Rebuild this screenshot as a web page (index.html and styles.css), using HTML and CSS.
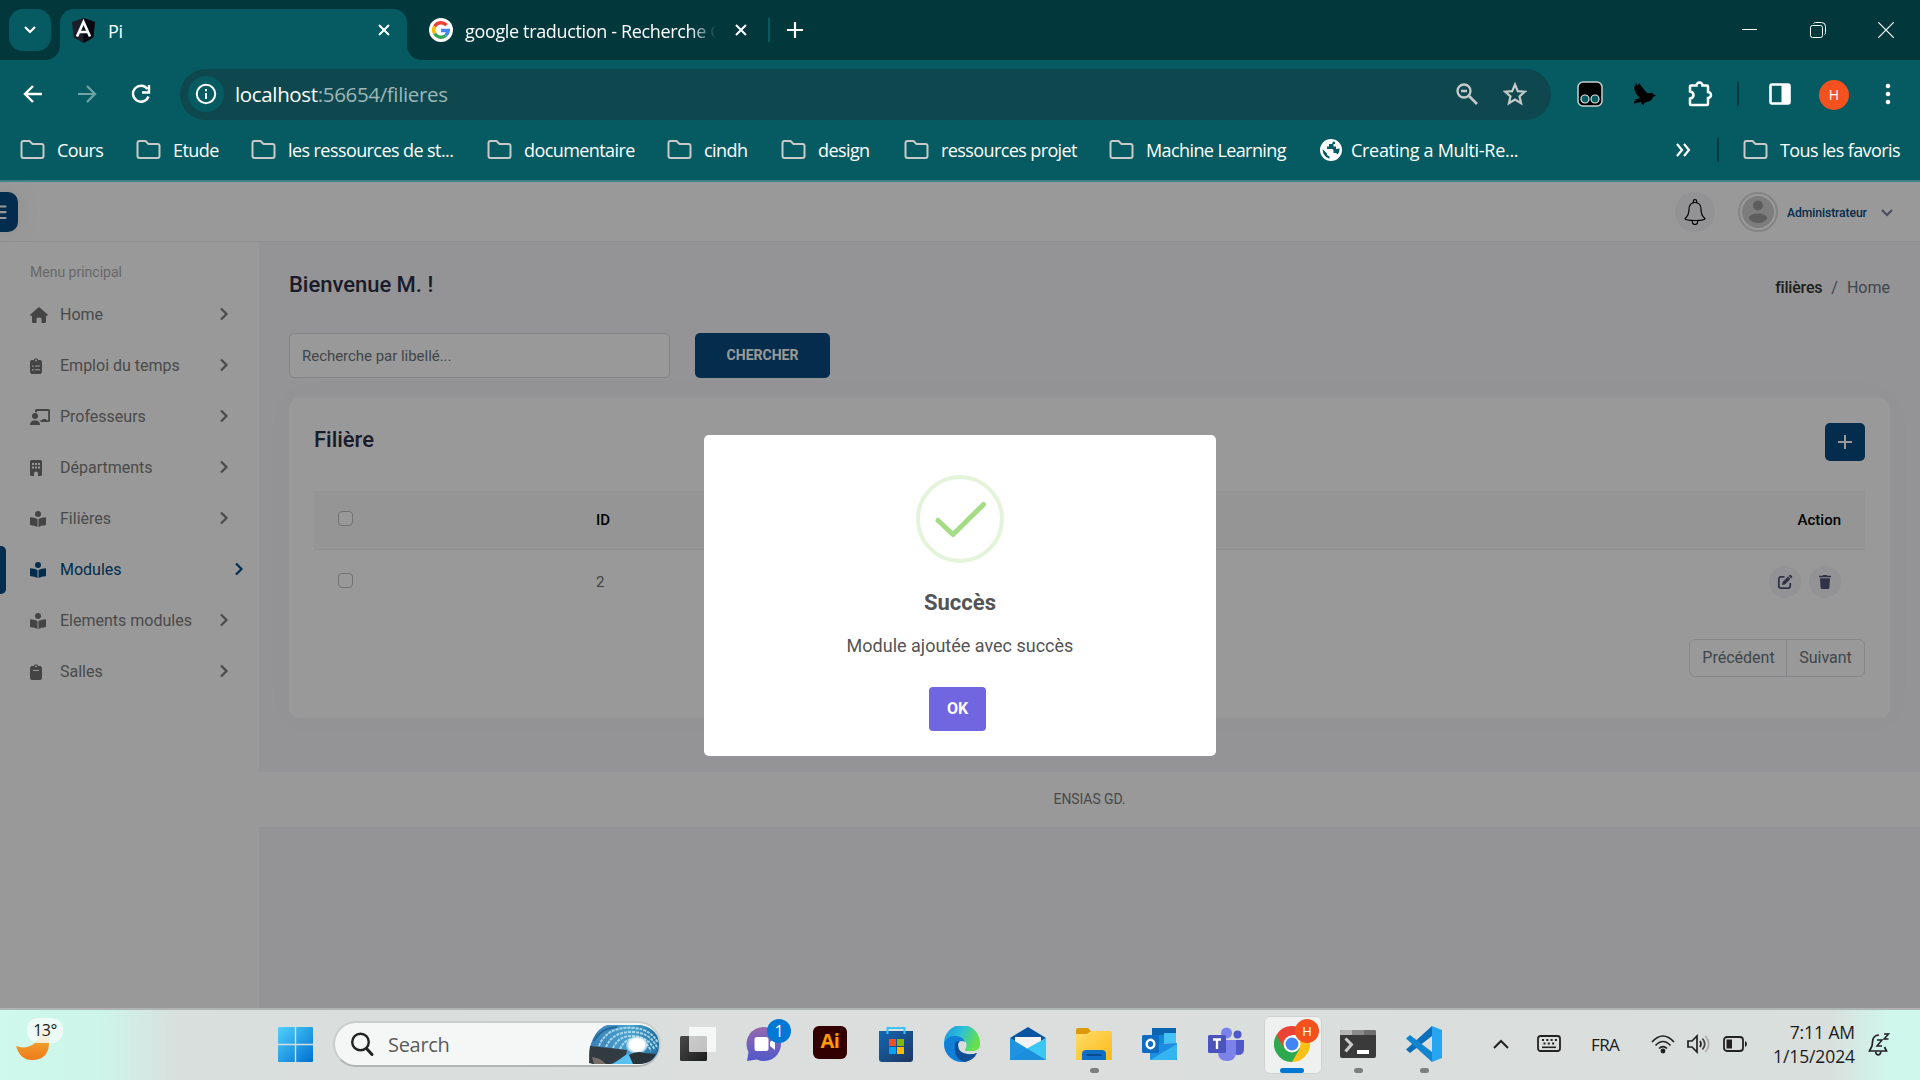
FILE: index.html
```html
<!DOCTYPE html>
<html lang="fr">
<head>
<meta charset="utf-8">
<title>Pi</title>
<link rel="stylesheet" href="styles.css">
</head>
<body>
<svg class="defs" width="0" height="0">
  <defs>
    <symbol id="folder" viewBox="0 0 25 21"><path d="M1.500 17V4q0-2 2-2h6l3 3h9q2 0 2 2v10q0 2-2 2h-18q-2 0-2-2z" fill="none" stroke="#c9c9c9" stroke-width="2"/></symbol>
    <symbol id="x" viewBox="0 0 14 14"><path d="M2 2l10 10M12 2L2 12" stroke="#fff" stroke-width="2" fill="none"/></symbol>
    <symbol id="chev" viewBox="0 0 10 14"><path d="M2 1.500l5.500 5.500L2 12.500" fill="none" stroke="currentColor" stroke-width="2.200"/></symbol>
    <symbol id="reader" viewBox="0 0 16 16"><circle cx="8" cy="3" r="3"/><path d="M0 6.300q4.500 0 7.500 1.700v8Q4.500 14.400.8 14.300q-.8 0-.8-.8zM16 6.300q-4.500 0-7.500 1.700v8q3-1.600 6.700-1.700.8 0 .8-.8z"/></symbol>
    <symbol id="home" viewBox="0 0 18 16"><path d="M9 0l8.700 7.600q.5.900-.6 1.200H16v6q0 1.200-1.200 1.200h-2.300q-1 0-1-1v-3.300q0-1-1-1H7.600q-1 0-1 1V15q0 1-1 1H3.300Q2 16 2 14.800v-6H.9Q-.2 8.500.3 7.600z"/></symbol>
    <symbol id="cliplist" viewBox="0 0 12 16"><path fill-rule="evenodd" d="M2 2h1.700a2.400 2.400 0 0 1 4.600 0H10q2 0 2 2v10q0 2-2 2H2q-2 0-2-2V4q0-2 2-2zm4-.5a.9.9 0 1 0 .01 0zM2 7.400v1.400h1.500V7.400zm3 0v1.100h5V7.400zM2 11v1.400h1.500V11zm3 .2v1.100h5v-1.100z"/></symbol>
    <symbol id="clip" viewBox="0 0 12 16"><path fill-rule="evenodd" d="M2 2h1.700a2.400 2.400 0 0 1 4.600 0H10q2 0 2 2v10q0 2-2 2H2q-2 0-2-2V4q0-2 2-2zm4-.5a.9.9 0 1 0 .01 0zM3 6v.9h6V6z"/></symbol>
    <symbol id="prof" viewBox="0 0 20 16"><circle cx="5" cy="7" r="3"/><path d="M0 16q.3-4.600 4-4.600h2q3.700 0 4 4.600z"/><path d="M5 3V1.500Q5 0 6.500 0h12Q20 0 20 1.500v10q0 1.500-1.500 1.500H11l-1.500-1.800h2.800V10h4v1.200h1.900V2H7v1.500Q6 3 5 3z"/></symbol>
    <symbol id="build" viewBox="0 0 12 16"><path fill-rule="evenodd" d="M1.500 0h9Q12 0 12 1.500v13q0 1.500-1.500 1.500H8v-2.500a2 2 0 0 0-4 0V16H1.500Q0 16 0 14.500v-13Q0 0 1.500 0zM2 3v2h2V3zm3 0v2h2V3zm3 0v2h2V3zM2 6.500v2h2v-2zm3 0v2h2v-2zm3 0v2h2v-2z"/></symbol>
    <linearGradient id="gw" x1="0" y1="0" x2="1" y2="1"><stop offset="0" stop-color="#4fd2fd"/><stop offset="1" stop-color="#0070d1"/></linearGradient>
    <linearGradient id="gmoon" x1="0" y1="0" x2="0" y2="1"><stop offset="0" stop-color="#f4b93c"/><stop offset="1" stop-color="#ee7a18"/></linearGradient>
    <linearGradient id="gchat" x1="0" y1="0" x2="0" y2="1"><stop offset="0" stop-color="#9668b0"/><stop offset="1" stop-color="#5059c9"/></linearGradient>
    <linearGradient id="gstore" x1="0" y1="0" x2="1" y2="1"><stop offset="0" stop-color="#1267b4"/><stop offset="1" stop-color="#20355f"/></linearGradient>
    <linearGradient id="gedge" x1="0" y1="0" x2="1" y2=".4"><stop offset="0" stop-color="#1a8fdc"/><stop offset=".5" stop-color="#2cc0d8"/><stop offset="1" stop-color="#66e04c"/></linearGradient>
    <linearGradient id="gfold" x1="0" y1="0" x2="1" y2="1"><stop offset="0" stop-color="#ffdd6b"/><stop offset="1" stop-color="#fbb915"/></linearGradient>
    <linearGradient id="gdark" x1="0" y1="0" x2="1" y2="1"><stop offset="0" stop-color="#4a4a4a"/><stop offset="1" stop-color="#1c1c1c"/></linearGradient>
    <linearGradient id="gcave" x1="0" y1="0" x2="1" y2="0"><stop offset="0" stop-color="#3a7fb5"/><stop offset=".6" stop-color="#4aa3cf"/><stop offset="1" stop-color="#1f6d9c"/></linearGradient>
    <radialGradient id="gsun"><stop offset="0" stop-color="#fff"/><stop offset=".7" stop-color="#fff"/><stop offset="1" stop-color="#cfeaf6" stop-opacity=".4"/></radialGradient>
  </defs>
</svg>

<header class="tabs">
  <div class="tabsearch"><svg width="14" height="10" viewBox="0 0 14 10"><path d="M2 2l5 5 5-5" stroke="#fff" stroke-width="2.200" fill="none"/></svg></div>
  <div class="tab on">
    <svg width="25" height="25" viewBox="0 0 25 25"><path d="M12.500 0L24 4l-1.700 15.500L12.500 25l-9.800-5.500L1 4z" fill="#1b1f2a"/><path d="M12.500 0L24 4l-1.700 15.500L12.500 25z" fill="#06080f"/><path d="M6 18.500L12.500 4 19 18.500M8.500 14h8" stroke="#fff" stroke-width="2.600" fill="none"/></svg>
    <span class="tt">Pi</span>
    <svg class="tx" width="14" height="14"><use href="#x"/></svg>
  </div>
  <div class="tab off">
    <svg width="24" height="24" viewBox="0 0 24 24"><circle cx="12" cy="12" r="12" fill="#fff"/><g fill="none" stroke-width="3.400"><path d="M17.500 7.200A7.300 7.300 0 0 0 5.700 8.300" stroke="#ea4335"/><path d="M5.700 8.300a7.300 7.300 0 0 0 0 7.400" stroke="#fbbc05"/><path d="M5.700 15.700a7.300 7.300 0 0 0 10.800 2" stroke="#34a853"/><path d="M16.500 17.700a7.300 7.300 0 0 0 2.800-5.200H12" stroke="#4285f4"/></g></svg>
    <span class="tt">google traduction - Recherche G</span>
    <svg class="tx" width="14" height="14"><use href="#x"/></svg>
  </div>
  <i class="tsep"></i>
  <svg class="plus" width="16" height="16" viewBox="0 0 16 16"><path d="M8 0v16M0 8h16" stroke="#fff" stroke-width="2.200"/></svg>
  <div class="win">
    <svg width="16" height="16" viewBox="0 0 16 16"><path d="M0 7.500h15" stroke="#fff"/></svg>
    <svg width="16" height="16" viewBox="0 0 16 16"><rect x=".5" y="3.500" width="12" height="12" rx="2" fill="none" stroke="#fff"/><path d="M3.500 1.500q1-1 2-1h6q4 0 4 4v6q0 1.500-1 2" fill="none" stroke="#fff"/></svg>
    <svg width="16" height="16" viewBox="0 0 16 16"><path d="M0 0l16 16M16 0L0 16" stroke="#fff" stroke-width="1.200"/></svg>
  </div>
</header>

<div class="bar">
  <div class="nav">
    <svg width="20" height="20" viewBox="0 0 20 20"><path d="M19 10H2M10 2l-8 8 8 8" stroke="#fff" stroke-width="2.400" fill="none"/></svg>
    <svg width="20" height="20" viewBox="0 0 20 20"><path d="M1 10h17M10 2l8 8-8 8" stroke="#6fa3a7" stroke-width="2.200" fill="none"/></svg>
    <svg width="20" height="20" viewBox="0 0 20 20"><path d="M17.500 12.500A8 8 0 1 1 16.500 5" stroke="#fff" stroke-width="2.400" fill="none"/><path d="M18 1v7.500h-7" fill="none" stroke="#fff" stroke-width="2.400"/></svg>
  </div>
  <div class="omni">
    <div class="info"><svg width="22" height="22" viewBox="0 0 22 22"><circle cx="11" cy="11" r="9.200" fill="none" stroke="#fff" stroke-width="2"/><path d="M11 10v6M11 6v2.200" stroke="#fff" stroke-width="2"/></svg></div>
    <div class="url"><b>localhost</b>:56654/filieres</div>
    <svg width="22" height="22" viewBox="0 0 22 22"><circle cx="8" cy="8" r="6.500" fill="none" stroke="#c5c9ca" stroke-width="2.300"/><path d="M5 8h6M13 13l8 8" stroke="#c5c9ca" stroke-width="2.600"/></svg>
    <svg class="star" width="24" height="24" viewBox="0 0 24 24"><path d="M12 2.500l2.800 6.600 7 .6-5.300 4.600 1.600 6.900L12 17.500l-6.100 3.700 1.600-6.900-5.300-4.600 7-.6z" fill="none" stroke="#c5c9ca" stroke-width="2.200"/></svg>
  </div>
  <div class="ext">
    <svg width="26" height="26" viewBox="0 0 26 26"><rect x="1" y="1" width="24" height="24" rx="5" fill="#000" stroke="#c8cfd0" stroke-width="1.500"/><circle cx="8" cy="18" r="4" fill="#055b61" stroke="#dfe6e6" stroke-width="1.200"/><circle cx="18" cy="18" r="4" fill="#055b61" stroke="#dfe6e6" stroke-width="1.200"/></svg>
    <svg width="24" height="24" viewBox="0 0 24 24"><path d="M2 4l1 1 1-4 2 3 1-3 7 9q2 2 4 1 2-1 3 1l3 1.500-3 1.500q-1 4-6 5l-3 1v3l-1-2-1 1-1-3-7 1.500L2 19.500l3-1.500-3 0 6-2Q2 11 2 4z" fill="#000"/></svg>
    <svg width="26" height="26" viewBox="0 0 26 26"><path d="M3 5.500q0-1 1-1h5.500a3 3 0 0 1 6 0H20q1 0 1 1V11a3 3 0 0 1 0 6v6q0 1-1 1H4q-1 0-1-1v-5.500q3.500-.5 3.500-3.500T3 10.500z" fill="none" stroke="#fff" stroke-width="2.500"/></svg>
    <i class="sep"></i>
    <svg width="22" height="22" viewBox="0 0 22 22"><rect x="1.500" y="1.500" width="19" height="19" rx="1.500" fill="none" stroke="#fff" stroke-width="2.600"/><path d="M12.500 2H21v18h-8.500z" fill="#fff"/></svg>
    <div class="ava">H</div>
    <svg width="6" height="22" viewBox="0 0 6 22"><g fill="#fff"><circle cx="3" cy="3" r="2.300"/><circle cx="3" cy="11" r="2.300"/><circle cx="3" cy="19" r="2.300"/></g></svg>
  </div>
</div>

<nav class="marks">
  <a class="m1"><svg width="25" height="21"><use href="#folder"/></svg>Cours</a>
  <a class="m2"><svg width="25" height="21"><use href="#folder"/></svg>Etude</a>
  <a class="m3"><svg width="25" height="21"><use href="#folder"/></svg>les ressources de st...</a>
  <a class="m4"><svg width="25" height="21"><use href="#folder"/></svg>documentaire</a>
  <a class="m5"><svg width="25" height="21"><use href="#folder"/></svg>cindh</a>
  <a class="m6"><svg width="25" height="21"><use href="#folder"/></svg>design</a>
  <a class="m7"><svg width="25" height="21"><use href="#folder"/></svg>ressources projet</a>
  <a class="m8"><svg width="25" height="21"><use href="#folder"/></svg>Machine Learning</a>
  <a class="m9"><svg width="22" height="22" viewBox="0 0 22 22"><circle cx="11" cy="11" r="11" fill="#fff"/><path d="M13 2.500l-1 2.500H9v2.500H7V10h5q1.500 0 1.500 2v2h2q1.500 0 2 1.500Q20 13 19.500 9.500L16 10V7.500h-2.500V5H15V3zM2.500 10l4.500 4.500v1.500l2.500 1.500v2.200Q3 18 2.500 10z" fill="#055b61"/></svg>Creating a Multi-Re...</a>
  <svg class="more" width="16" height="14" viewBox="0 0 16 14"><path d="M2 1l5 6-5 6M9 1l5 6-5 6" fill="none" stroke="#fff" stroke-width="2.200"/></svg>
  <i class="sep"></i>
  <a class="m10"><svg width="25" height="21"><use href="#folder"/></svg>Tous les favoris</a>
</nav>

<div class="app">
  <div class="top">
    <div class="toggle"><svg width="18" height="15" viewBox="0 0 18 15"><path d="M1.500 1.500h15M1.500 7.200h15M1.500 13h15" stroke="#fff" stroke-width="2.200" stroke-linecap="round"/></svg></div>
    <div class="bell"><svg width="22" height="26" viewBox="0 0 22 26" fill="none" stroke="#000" stroke-width="1.200"><path d="M1 19.500q4-3 4-9Q5 3.500 11 3.500t6 7q0 6 4 9 0 2-10 2t-10-2z"/><path d="M9.300 3.700V2.400a1.700 1.700 0 0 1 3.400 0v1.300M8.300 21.500v1.300a2.700 2.700 0 0 0 5.400 0v-1.300"/></svg></div>
    <svg class="avatar" width="40" height="40" viewBox="0 0 40 40"><circle cx="20" cy="20" r="19" fill="#fff" stroke="#dcdcdc" stroke-width="2"/><circle cx="20" cy="20" r="16" fill="#d0d0d0"/><circle cx="20" cy="13.500" r="5" fill="#9c9c9c"/><path d="M10.500 26q2-4.500 9.500-4.500t9.500 4.500q-3 5-9.500 5t-9.500-5z" fill="#9c9c9c"/></svg>
    <span class="admin">Administrateur</span>
    <svg class="down" width="12" height="8" viewBox="0 0 12 8"><path d="M1 1l5 5 5-5" fill="none" stroke="#7c80a0" stroke-width="2.200"/></svg>
  </div>
  <div class="cols">
    <aside>
      <p>Menu principal</p>
      <a><span><svg width="18" height="16"><use href="#home"/></svg></span>Home<svg class="ch" width="10" height="14"><use href="#chev"/></svg></a>
      <a><span><svg width="12" height="16"><use href="#cliplist"/></svg></span>Emploi du temps<svg class="ch" width="10" height="14"><use href="#chev"/></svg></a>
      <a><span><svg width="20" height="16"><use href="#prof"/></svg></span>Professeurs<svg class="ch" width="10" height="14"><use href="#chev"/></svg></a>
      <a><span><svg width="12" height="16"><use href="#build"/></svg></span>Départments<svg class="ch" width="10" height="14"><use href="#chev"/></svg></a>
      <a><span><svg width="16" height="16"><use href="#reader"/></svg></span>Filières<svg class="ch" width="10" height="14"><use href="#chev"/></svg></a>
      <a class="act"><span><svg width="16" height="16"><use href="#reader"/></svg></span>Modules<svg class="ch" width="10" height="14"><use href="#chev"/></svg></a>
      <a><span><svg width="16" height="16"><use href="#reader"/></svg></span>Elements modules<svg class="ch" width="10" height="14"><use href="#chev"/></svg></a>
      <a><span><svg width="12" height="16"><use href="#clip"/></svg></span>Salles<svg class="ch" width="10" height="14"><use href="#chev"/></svg></a>
    </aside>
    <main>
      <div class="content">
        <div class="head"><h3>Bienvenue M. !</h3><div class="crumb"><b>filières</b><i>/</i>Home</div></div>
        <div class="search"><div class="inp">Recherche par libellé...</div><div class="btn">CHERCHER</div></div>
        <section class="card">
          <div class="ctop"><h3>Filière</h3><div class="add"><svg width="14" height="14" viewBox="0 0 14 14"><path d="M7 0v14M0 7h14" stroke="#fff" stroke-width="2"/></svg></div></div>
          <div class="row th"><i class="cb"></i><span class="id">ID</span><span class="end">Action</span></div>
          <div class="row"><i class="cb"></i><span class="id">2</span>
            <div class="acts">
              <div><svg width="16" height="16" viewBox="0 0 16 16"><path d="M7.500 2.800H4q-2.200 0-2.200 2.200v7q0 2.200 2.200 2.200h7q2.200 0 2.200-2.200V9" fill="none" stroke="#51547a" stroke-width="1.800"/><path d="M5 11l.6-3L11 2.600l2.500 2.500L8 10.400zM11.700 1.900l.8-.8q.7-.6 1.400 0l1 1q.7.700 0 1.500l-.7.800z" fill="#51547a"/></svg></div>
              <div><svg width="14" height="16" viewBox="0 0 14 16"><path d="M1 1.800h3.500l.7-.8h3.600l.7.800H13v1.500H1zM2 4.300h10l-.6 9.400q-.1 1.300-1.400 1.300H4q-1.300 0-1.400-1.300z" fill="#51547a"/></svg></div>
            </div>
          </div>
          <div class="pager"><span>Précédent</span><span>Suivant</span></div>
        </section>
      </div>
      <footer>ENSIAS GD.</footer>
    </main>
  </div>
  <div class="overlay">
    <div class="modal">
      <svg width="88" height="88" viewBox="0 0 88 88"><circle cx="44" cy="44" r="42" fill="none" stroke="#e4f4db" stroke-width="4"/><path d="M22 45.500L37 59.500 67.500 29.500" fill="none" stroke="#a5dc86" stroke-width="5" stroke-linecap="round" stroke-linejoin="round"/></svg>
      <h2>Succès</h2>
      <p>Module ajoutée avec succès</p>
      <div class="ok">OK</div>
    </div>
  </div>
</div>

<div class="task">
  <div class="weather"><svg width="34" height="34" viewBox="0 0 34 34"><path d="M26 1q8 6 7 16-1 16-17 16Q4 33 0 19q10 4 19-3 7-6 7-15z" fill="url(#gmoon)"/></svg><span>13°</span></div>
  <svg class="start" width="35" height="35" viewBox="0 0 35 35" fill="url(#gw)"><path d="M1 0h15.800v16.800H0V1q0-1 1-1zM18.200 0H34q1 0 1 1v15.800H18.200zM0 18.200h16.800V35H1q-1 0-1-1zM18.200 18.200H35V34q0 1-1 1H18.200z"/></svg>
  <div class="sbox">
    <svg width="24" height="24" viewBox="0 0 24 24"><circle cx="10.500" cy="10" r="8.300" fill="none" stroke="#222" stroke-width="2.400"/><path d="M16.500 16.500L22 22.500" stroke="#222" stroke-width="3" stroke-linecap="round"/></svg>
    <span>Search</span>
    <svg class="cave" width="70" height="39" viewBox="0 0 70 39"><path d="M18 0h34q18 4 18 20T52 39H4Q-2 36 1 22 6 4 18 0z" fill="url(#gcave)"/><g fill="none" stroke="#b9e2f2" stroke-dasharray="3 1" stroke-width="2" stroke-opacity=".85"><path d="M10 21Q18 1 44 3q18 1 25 15"/><path d="M17 22Q24 6 45 7q16 1 23 15"/><path d="M24 23q6-13 21-12 14 1 21 14"/><path d="M31 24q5-11 16-10 10 1 15 12"/></g><path d="M5 16Q12 3 28 2" fill="none" stroke="#24679b" stroke-width="2"/><ellipse cx="48" cy="20" rx="11" ry="9" fill="url(#gsun)"/><path d="M0 38l1-17 20 2 17 2-1 7-15 7H4z" fill="#333b42"/><path d="M3 32l8 2 6 5H5z" fill="#77706a"/><path d="M24 39l14-10 5 4 1 6z" fill="#58c3f2"/><path d="M40 30q8-5 15-2l12 1q-4 9-15 10h-8z" fill="#2b333a"/></svg>
  </div>
  <div class="apps">
    <div><svg width="36" height="36" viewBox="0 0 36 36"><rect x="0" y="10" width="27" height="25" rx="1.500" fill="url(#gdark)"/><rect x="9" y="1" width="27" height="25" rx="1" fill="#fff" fill-opacity=".72"/></svg></div>
    <div><svg width="36" height="36" viewBox="0 0 36 36"><path d="M18 1a17 17 0 1 1-7 32.500L1 35l1.500-9A17 17 0 0 1 18 1z" fill="url(#gchat)"/><rect x="8.500" y="11" width="14" height="14" rx="2.500" fill="#fff"/><path d="M24 16l5-4v12l-5-4z" fill="#fff"/></svg><b class="badge">1</b></div>
    <div><span class="ai">Ai</span></div>
    <div><svg width="36" height="36" viewBox="0 0 36 36"><path d="M1 5h34v28q0 3-3 3H4q-3 0-3-3z" fill="url(#gstore)"/><path d="M9.500 8V2h17v6" fill="none" stroke="#3cc4f5" stroke-width="2"/><path fill="#f25022" d="M11 13h7v7h-7z"/><path fill="#7fba00" d="M19 13h7v7h-7z"/><path fill="#00a4ef" d="M11 21h7v7h-7z"/><path fill="#ffb900" d="M19 21h7v7h-7z"/></svg></div>
    <div><svg width="36" height="36" viewBox="0 0 36 36"><path d="M0 18a18 18 0 0 1 36-2q1 9-8 9h-6q-2 0 0-3 2-7-4-8-8 0-10 6z" fill="url(#gedge)"/><path d="M0 18Q2 10 11 10q8 0 10 6-6-3-7 3 0 8 9 9 6 1 10-1-5 9-15 9A18 18 0 0 1 0 18z" fill="#0f7fd8"/><path d="M11 18q-2 14 9 18 9-1 13-9-5 2-10 1-9-1-9-9 0-2 1-4-3 0-4 3z" fill="#114d94"/></svg></div>
    <div><svg width="36" height="36" viewBox="0 0 36 36"><path d="M0 12L18 1l18 11-18 12z" fill="#0a55a0"/><path d="M5 11h26v7L18 26 5 18z" fill="#f3f3f3"/><path d="M0 12l36 22H0z" fill="#1f94e0"/><path d="M36 12v22L17 22.500z" fill="#3cc6f2"/><path d="M0 34h36L18 23z" fill="#1c8fdc"/></svg></div>
    <div><svg width="36" height="36" viewBox="0 0 36 36"><path d="M0 4q0-2 2-2h10l3 3v4H0z" fill="#dc9a0a"/><path d="M0 8h11l4-3h19q2 0 2 2v27H0z" fill="url(#gfold)"/><path d="M6 34v-6q0-4 4-4h16q4 0 4 4v6z" fill="#0f6fc6"/><path d="M10.500 29h15" stroke="#0a3f80" stroke-width="1.500"/></svg><i class="dot"></i></div>
    <div><svg width="36" height="36" viewBox="0 0 36 36"><path d="M10 2h24v14H10z" fill="#0c64b0"/><path d="M10 9h12v9H10z" fill="#1489d8"/><path d="M22 7h12v10H22z" fill="#42c2f5"/><path d="M8 18l27-1v17H8z" fill="#1c8de0"/><path d="M8 34l27-16v14q0 2-2 2z" fill="#36b4f0"/><rect x="0" y="9" width="17" height="18" rx="1.500" fill="#0f6cc4"/><ellipse cx="8.500" cy="18" rx="3.800" ry="4.300" fill="none" stroke="#fff" stroke-width="2.500"/></svg></div>
    <div><svg width="36" height="36" viewBox="0 0 36 36"><circle cx="18.500" cy="7" r="5.500" fill="#7b83eb"/><circle cx="29.500" cy="8.500" r="4" fill="#5059c9"/><path d="M24 14h12v9q0 6-6 6-4 0-6-3z" fill="#5059c9"/><path d="M10 14h18v12q0 9-9 9t-9-9z" fill="#7b83eb"/><rect x="0" y="9" width="18" height="18" rx="1.500" fill="#4b53bc"/><path d="M5 13.500h8M9 13.500V23" stroke="#fff" stroke-width="2.300"/></svg></div>
    <div class="tile"><svg width="36" height="36" viewBox="0 0 36 36"><path d="M18 18L33.600 9A18 18 0 0 1 18 36z" fill="#fbc116"/><path d="M2.400 9A18 18 0 0 0 18 36l7.800-13.500L18 18z" fill="#2da94f"/><path d="M2.400 9A18 18 0 0 1 33.600 9H18L10.200 22.500z" fill="#ea4335"/><circle cx="18" cy="18" r="8.500" fill="#fff"/><circle cx="18" cy="18" r="6.500" fill="#4285f4"/></svg><b class="badge red">H</b><i class="dot blue"></i></div>
    <div><svg width="36" height="36" viewBox="0 0 36 36"><rect x="0" y="4" width="36" height="28" rx="2" fill="#3a3a3a"/><path d="M2 4h10v5H0V6q0-2 2-2z" fill="#b5b5b5"/><path d="M12 4h12v5H12z" fill="#8b8b8b"/><path d="M24 4h10q2 0 2 2v3H24z" fill="#6e6e6e"/><path d="M5.500 12.500l6 6-6 7" fill="none" stroke="#ccc" stroke-width="3"/><path d="M17 24h12v4H17z" fill="#fff"/></svg><i class="dot"></i></div>
    <div><svg width="36" height="36" viewBox="0 0 36 36"><path d="M26 0v10L4 27l-4-3.500z" fill="#0a6fb8"/><path d="M0 12.500L4 9l22 17v10z" fill="#1185cf"/><path d="M26 0l10 4v28l-10 4z" fill="#28a5f0"/></svg><i class="dot"></i></div>
  </div>
  <div class="tray">
    <svg width="16" height="10" viewBox="0 0 16 10"><path d="M1 9l7-7 7 7" fill="none" stroke="#222" stroke-width="2"/></svg>
    <svg width="24" height="18" viewBox="0 0 24 18"><rect x="1" y="1" width="22" height="15" rx="2.500" fill="none" stroke="#222" stroke-width="1.800"/><path d="M5 5h15M6.500 8.500h12" stroke="#222" stroke-width="1.800" stroke-dasharray="2 2.300"/><path d="M5 12.300h14" stroke="#222" stroke-width="1.600"/></svg>
    <span class="fra">FRA</span>
    <svg width="24" height="20" viewBox="0 0 24 20" fill="none" stroke="#222" stroke-width="1.700"><path d="M1 8q11-12 22 0M4.500 11.500q7.500-8 15 0M8 14.500q4-4 8 0"/><circle cx="12" cy="17" r="1.600" fill="#222"/></svg>
    <svg width="24" height="20" viewBox="0 0 24 20" fill="none" stroke="#222" stroke-width="1.700"><path d="M1 7h4l5-5v16l-5-5H1z"/><path d="M13 7q2 3 0 6"/><path d="M15.500 4.500q4.500 5.500 0 11" stroke="#444"/><path d="M18.500 2q6.500 8 0 16" stroke="#aaa"/></svg>
    <svg width="24" height="16" viewBox="0 0 24 16"><rect x="1" y="1" width="19" height="14" rx="3" fill="none" stroke="#222" stroke-width="1.800"/><path d="M3.500 3.500H9v9H3.500z" fill="#222"/><path d="M22 5q2 1 2 3t-2 3z" fill="#222"/></svg>
    <div class="clock">7:11 AM<br>1/15/2024</div>
    <svg width="22" height="24" viewBox="0 0 22 24" fill="none" stroke="#222" stroke-width="1.700"><path d="M11 3q-6 0-6.500 7L4 14l-2.500 5h17L16.500 15M7.500 20q1 3 2.700 3t2.800-3"/><path d="M9 8h5l-5 6h5M16 2h4.500L16 7h4.500" stroke-width="1.500"/></svg>
  </div>
</div>
</body>
</html>
```
FILE: styles.css
```css
* { box-sizing: border-box; }
body {
  margin: 0; width: 1920px; height: 1080px; overflow: hidden;
  display: flex; flex-direction: column;
  font-family: Roboto, "Liberation Sans", sans-serif; background: #055b61;
}
.defs { position: absolute; }
svg { flex: none; display: block; }
i, b { font-style: normal; }
h2, h3, p { margin: 0; }
.tabs, .bar, .marks, .task { font-family: "Open Sans", "Noto Sans", sans-serif; color: #fff; }

/* browser tab strip */
.tabs { height: 60px; flex: none; background: #02373c; display: flex; align-items: center; padding-left: 9px; }
.tabsearch { width: 42px; height: 42px; border-radius: 14px; background: #055b61; display: flex; align-items: center; justify-content: center; }
.tab { display: flex; align-items: center; font-size: 18px; letter-spacing: -.35px; white-space: nowrap; }
.tab.on { position: relative; margin-left: 9px; align-self: flex-end; width: 347px; height: 51px; background: #055b61; border-radius: 14px 14px 0 0; padding: 0 16px 9px 11px; }
.tab.on::before, .tab.on::after { content: ""; position: absolute; bottom: 0; width: 14px; height: 14px; }
.tab.on::before { left: -14px; background: radial-gradient(circle at 0 0, transparent 13.5px, #055b61 14px); }
.tab.on::after { right: -14px; background: radial-gradient(circle at 100% 0, transparent 13.5px, #055b61 14px); }
.tab .tt { margin-left: 12px; padding-top: 2px; flex: 1; }
.tab.off { width: 341px; margin-left: 22px; }
.tab.off .tt { flex: none; width: 264px; margin-left: 12px; -webkit-mask-image: linear-gradient(90deg, #000 225px, transparent 251px); mask-image: linear-gradient(90deg, #000 225px, transparent 251px); }
.tab.off .tx { margin-left: 5px; }
.tsep { width: 2px; height: 24px; background: #055b61; margin: 0 0 0 -2px; }
.plus { margin-left: 17px; }
.win { margin-left: auto; display: flex; gap: 52px; padding-right: 26px; }

/* toolbar */
.bar { height: 68px; flex: none; background: #055b61; display: flex; align-items: center; }
.nav { display: flex; gap: 34px; padding-left: 23px; width: 180px; }
.omni { width: 1371px; height: 51px; border-radius: 26px; background: #0e484e; display: flex; align-items: center; padding: 0 24px 0 8px; }
.info { width: 36px; height: 36px; border-radius: 50%; background: #055b61; display: flex; align-items: center; justify-content: center; }
.url { flex: 1; margin-left: 11px; font-size: 20.5px; letter-spacing: -.35px; color: #9fb6b8; }
.url b { font-weight: 400; color: #fff; }
.star { margin-left: 25px; }
.ext { display: flex; align-items: center; padding-left: 26px; }
.ext > :nth-child(2) { margin-left: 29px; }
.ext > :nth-child(3) { margin-left: 31px; }
.sep { width: 2px; height: 24px; background: #02373c; }
.ext .sep { margin-left: 24px; }
.ext > :nth-child(5) { margin-left: 30px; }
.ava { width: 30px; height: 30px; margin: 1px 36px 0 28px; border-radius: 50%; background: #f4511e; font-size: 14px; display: flex; align-items: center; justify-content: center; }

/* bookmarks */
.marks { height: 54px; flex: none; display: flex; align-items: center; padding: 0 0 9px 20px; border-bottom: 2px solid #3f8186; font-size: 18px; letter-spacing: -.58px; white-space: nowrap; }
.marks a { display: flex; align-items: center; gap: 12px; flex: none; }
.m1 { width: 116px; } .m2 { width: 115px; } .m3 { width: 236px; } .m4 { width: 180px; }
.m5 { width: 114px; } .m6 { width: 123px; } .m7 { width: 205px; } .m8 { width: 211px; }
.marks .m7, .marks .m8 { letter-spacing: -.6px; }
.marks .m9 { width: 355px; gap: 9px; letter-spacing: -.3px; }
.more { margin-right: 26px; }
.m10 { margin-left: 24px; }

/* application */
.app { position: relative; height: 826px; flex: none; background: #f7f7fa; display: flex; flex-direction: column; overflow: hidden; }
.top { height: 60px; flex: none; background: #fff; border-bottom: 1px solid #efefef; display: flex; align-items: center; padding: 1px 27px 0 0; }
.toggle { width: 40px; height: 40px; margin-left: -22px; border-radius: 10px; background: #054a80; box-shadow: 0 0 30px rgba(0,0,0,.06); display: flex; align-items: center; justify-content: center; }
.bell { width: 40px; height: 40px; margin-left: auto; border-radius: 50%; background: #f5f5f9; display: flex; align-items: center; justify-content: center; }
.avatar { margin-left: 23px; }
.admin { width: 94px; margin: 1px 0 0 9px; font-size: 12.2px; font-weight: 500; letter-spacing: -.1px; color: #054a80; }
.down { margin-top: 2px; }
.cols { display: flex; flex: 1; }
aside { width: 259px; background: #fff; padding-top: 21px; }
aside p { font-size: 14px; line-height: 18px; padding-left: 30px; margin-bottom: 9px; color: #aeaeae; }
aside a { height: 48px; margin-bottom: 3px; display: flex; align-items: center; padding: 0 30px 0 30px; font-size: 16px; color: #7c7c7c; }
aside a span { width: 30px; color: #727272; fill: currentColor; padding-top: 2px; }
.ch { margin-left: auto; }
aside .act { padding: 0 15px 0 30px; color: #054a80; position: relative; }
aside .act::before { content: ""; position: absolute; left: 0; top: 1px; width: 6px; height: 48px; border-radius: 0 5px 5px 0; background: #054a80; }
aside .act span { color: #054a80; }
main { flex: 1; }
.content { height: 530px; padding: 29px 30px 0; }
.head { display: flex; justify-content: space-between; height: 62px; }
h3 { font-size: 22px; line-height: 28px; font-weight: 500; letter-spacing: -.02px; color: #2c3046; }
.crumb { font-size: 16px; line-height: 34px; color: #6c757d; }
.crumb b { font-weight: 500; letter-spacing: -.2px; color: #333; }
.crumb i { margin: 0 9px; }
.search { display: flex; gap: 25px; height: 45px; }
.inp { width: 381px; border: 1px solid #ddd; border-radius: 5px; background: #fff; padding-left: 12px; line-height: 45px; font-size: 15px; letter-spacing: -.03px; color: #6c757d; }
.btn { width: 135px; border-radius: 5px; background: #054a80; color: #fff; font-weight: 700; font-size: 14px; line-height: 45px; text-align: center; }
.card { height: 320px; margin-top: 20px; padding: 25px; border-radius: 10px; background: #fff; box-shadow: 0 0 31px 3px rgba(44,50,63,.02); }
.ctop { display: flex; justify-content: space-between; height: 68px; }
.ctop h3 { line-height: 33px; }
.add { width: 40px; height: 38px; border-radius: 5px; background: #054a80; display: flex; align-items: center; justify-content: center; padding-bottom: 1px; }
.row { height: 64px; display: flex; align-items: center; padding: 0 24px; font-size: 15px; color: #6f6f6f; }
.th { height: 59px; background: #f8f8f8; border-bottom: 1px solid #eee; color: #000; font-weight: 500; }
.cb { width: 15px; height: 15px; margin-bottom: 3px; border: 1px solid #bfbfbf; border-radius: 4px; background: #fff; }
.id { margin-left: 243px; }
.end { margin-left: auto; }
.acts { display: flex; gap: 8px; margin-left: auto; }
.acts div { width: 32px; height: 32px; border-radius: 50%; background: #f5f5f9; display: flex; align-items: center; justify-content: center; }
.acts div:last-child { padding-right: 1px; }
.pager { display: flex; width: 176px; height: 38px; margin: 25px 0 0 auto; border: 1px solid #dee2e6; border-radius: 6px; font-size: 16px; line-height: 35px; color: #6c757d; text-align: center; }
.pager span:first-child { width: 97px; border-right: 1px solid #dee2e6; padding-left: 1px; }
.pager span:last-child { flex: 1; }
footer { height: 55px; background: #fff; text-align: center; font-size: 14px; line-height: 55px; letter-spacing: -.1px; color: #7a7a7a; }

/* dialog */
.overlay { position: absolute; inset: 0; background: rgba(0,0,0,.4); display: flex; align-items: center; justify-content: center; }
.modal { width: 512px; height: 321px; border-radius: 5px; background: #fff; display: flex; flex-direction: column; align-items: center; padding-top: 40px; color: #545454; }
.modal h2 { font-size: 22px; line-height: 26px; font-weight: 700; margin-top: 27px; }
.modal p { font-size: 18px; line-height: 26px; margin-top: 17px; }
.ok { width: 57px; height: 44px; margin: 28px 5px 0 0; border-radius: 4px; background: #7066e0; color: #fff; font-size: 16px; font-weight: 700; line-height: 43px; text-align: center; }

/* taskbar */
.task { height: 72px; flex: none; border-top: 2px solid #aeb4b3; padding-bottom: 2px; background: linear-gradient(90deg, #cff9ed 0, #cdf5ea 100px, #d9dfdd 180px, #dbdedd 900px, #d9dfdd 1830px, #cff7ec 1890px); display: flex; align-items: center; color: #1b1b1b; }
.weather { position: relative; width: 278px; height: 70px; padding: 18px 0 0 16px; }
.weather span { position: absolute; left: 27px; top: 9px; width: 36px; height: 25px; border-radius: 11px; background: rgba(243,250,248,.85); font-size: 16px; line-height: 24px; letter-spacing: -.5px; text-align: center; }
.sbox { width: 328px; height: 46px; margin-left: 20px; border: 2px solid #c9cecd; border-bottom-color: #b1b6b5; border-radius: 23px; background: #f5f7f6; display: flex; align-items: center; padding-left: 15px; font-size: 20px; letter-spacing: -.3px; color: #5b5b5b; }
.sbox span { margin-left: 14px; }
.cave { margin-left: auto; }
.apps { display: flex; margin-left: 4px; }
.apps div { position: relative; width: 66px; height: 70px; display: flex; align-items: center; justify-content: center; }
.apps .tile::before { content: ""; position: absolute; left: 5px; top: 7px; width: 56px; height: 56px; border-radius: 6px; background: #eff1f0; border: 1px solid #cfd4d3; }
.tile svg { position: relative; }
.badge { position: absolute; left: 36px; top: 10px; width: 24px; height: 24px; border-radius: 50%; background: #0078d4; color: #fff; font-size: 16px; font-weight: 400; line-height: 24px; text-align: center; }
.badge.red { background: #f4511e; font-size: 13px; }
.dot { position: absolute; left: 29px; top: 59px; width: 9px; height: 5px; border-radius: 3px; background: #7b7f7e; }
.dot.blue { left: 21px; width: 24px; background: #0078d4; }
.ai { width: 34px; height: 33px; margin-top: -3px; border-radius: 6px; background: #330000; color: #ff9a00; font-weight: 700; font-size: 20px; line-height: 29px; text-align: center; letter-spacing: -.5px; }
.tray { display: flex; align-items: center; margin-left: 36px; }
.tray > :nth-child(2) { margin-left: 28px; }
.fra { margin: 0 30px; font-size: 17px; letter-spacing: -.6px; width: 30px; }
.tray > :nth-child(5), .tray > :nth-child(6) { margin-left: 12px; }
.clock { width: 108px; text-align: right; font-size: 17.5px; line-height: 24px; letter-spacing: -.1px; margin-right: 13px; }
```
